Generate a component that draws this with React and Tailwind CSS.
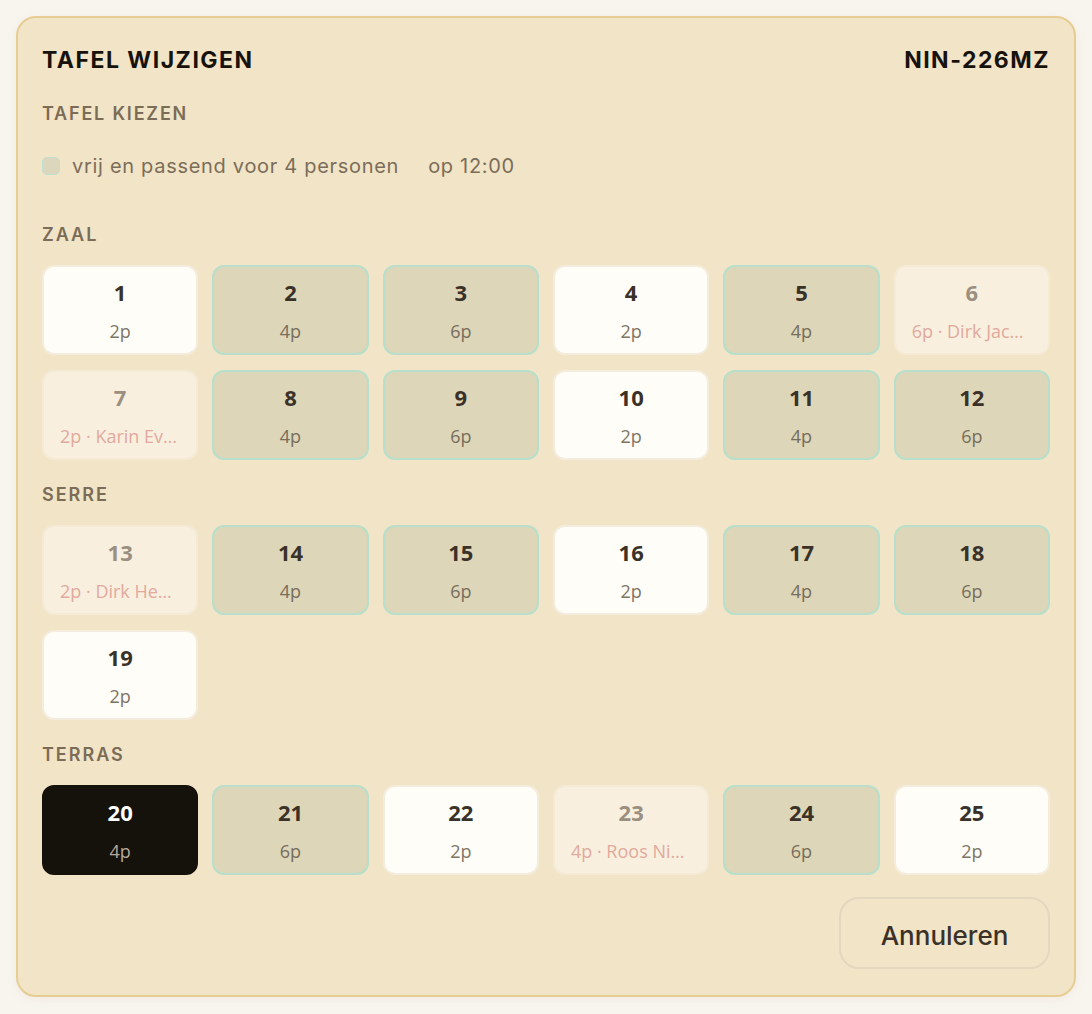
const sections = [
  {
    name: 'ZAAL',
    tables: [
      { n: 1, size: '2p', kind: 'open' },
      { n: 2, size: '4p', kind: 'fit' },
      { n: 3, size: '6p', kind: 'fit' },
      { n: 4, size: '2p', kind: 'open' },
      { n: 5, size: '4p', kind: 'fit' },
      { n: 6, size: '6p', kind: 'taken', guest: 'Dirk Jacobs' },
      { n: 7, size: '2p', kind: 'taken', guest: 'Karin Evers' },
      { n: 8, size: '4p', kind: 'fit' },
      { n: 9, size: '6p', kind: 'fit' },
      { n: 10, size: '2p', kind: 'open' },
      { n: 11, size: '4p', kind: 'fit' },
      { n: 12, size: '6p', kind: 'fit' },
    ],
  },
  {
    name: 'SERRE',
    tables: [
      { n: 13, size: '2p', kind: 'taken', guest: 'Dirk Hendriks' },
      { n: 14, size: '4p', kind: 'fit' },
      { n: 15, size: '6p', kind: 'fit' },
      { n: 16, size: '2p', kind: 'open' },
      { n: 17, size: '4p', kind: 'fit' },
      { n: 18, size: '6p', kind: 'fit' },
      { n: 19, size: '2p', kind: 'open' },
    ],
  },
  {
    name: 'TERRAS',
    tables: [
      { n: 20, size: '4p', kind: 'selected' },
      { n: 21, size: '6p', kind: 'fit' },
      { n: 22, size: '2p', kind: 'open' },
      { n: 23, size: '4p', kind: 'taken', guest: 'Roos Nieuwenhuis' },
      { n: 24, size: '6p', kind: 'fit' },
      { n: 25, size: '2p', kind: 'open' },
    ],
  },
]

const tileStyles = {
  open: {
    box: 'bg-[#fffdf8] border-[#f4ecdc]',
    num: 'text-[#3a3128]',
    sub: 'text-[#7d7464]',
  },
  fit: {
    box: 'bg-[#ddd6b9] border-[#b8dfcb]',
    num: 'text-[#3a3128]',
    sub: 'text-[#776d5b]',
  },
  taken: {
    box: 'bg-[#f8efdf] border-[#f5ead6]',
    num: 'text-[#9a8f80]',
    sub: 'text-[#e2a99d]',
  },
  selected: {
    box: 'bg-[#15110b] border-[#15110b]',
    num: 'text-white',
    sub: 'text-[#b5ab9c]',
  },
}

function Tile({ table }) {
  const s = tileStyles[table.kind]
  return (
    <button
      className={`h-[90px] min-w-0 rounded-xl border-2 flex flex-col items-center justify-center px-4 ${s.box}`}
      style={{ fontFamily: '"Open Sans", sans-serif' }}
    >
      <span className={`text-[22px] leading-7 font-bold ${s.num}`}>{table.n}</span>
      <span className={`mt-[13px] text-[18px] leading-6 w-full truncate ${s.sub}`}>
        {table.guest ? `${table.size} · ${table.guest}` : table.size}
      </span>
    </button>
  )
}

export default function App() {
  return (
    <div className="min-h-screen bg-[#f8f5ef] p-4" style={{ fontFamily: 'Inter, sans-serif' }}>
      <div className="rounded-[20px] border-2 border-[#e7cd93] bg-[#f2e4c6] px-6 pt-6 pb-[26px] shadow-[0_2px_12px_rgba(120,90,40,0.06)]">
        <div className="flex items-center justify-between h-9">
          <h1 className="text-[23px] font-bold tracking-[0.065em] text-[#17120c]">TAFEL WIJZIGEN</h1>
          <span className="text-[23px] font-bold tracking-[0.065em] text-[#17120c]">NIN-226MZ</span>
        </div>

        <h2 className="mt-6 leading-6 text-[18px] font-semibold tracking-[0.1em] text-[#7b6c57]">TAFEL KIEZEN</h2>

        <div className="mt-[26px] h-7 flex items-center text-[20px] tracking-[0.035em] text-[#7b6d5a]">
          <span className="w-[18px] h-[18px] rounded-[5px] bg-[#dcd6bc] border-[1.5px] border-[#bfe0cf]" />
          <span className="ml-3">vrij en passend voor 4 personen</span>
          <span className="ml-[29px]">op 12:00</span>
        </div>

        <div className="mt-[43px]">
          {sections.map((sec, i) => (
            <section key={sec.name} className={i > 0 ? 'mt-[23px]' : ''}>
              <h3 className="leading-6 text-[18px] font-semibold tracking-[0.11em] text-[#7b6c57]">{sec.name}</h3>
              <div className="mt-[18px] grid grid-cols-6 gap-x-[14px] gap-y-[15px]">
                {sec.tables.map(t => (
                  <Tile key={t.n} table={t} />
                ))}
              </div>
            </section>
          ))}
        </div>

        <div className="mt-[22px] flex justify-end">
          <button className="h-[72px] w-[211px] rounded-[20px] border-2 border-[#e3d7c0] pt-1 text-[26px] font-medium text-[#3a3128]">
            Annuleren
          </button>
        </div>
      </div>
    </div>
  )
}
